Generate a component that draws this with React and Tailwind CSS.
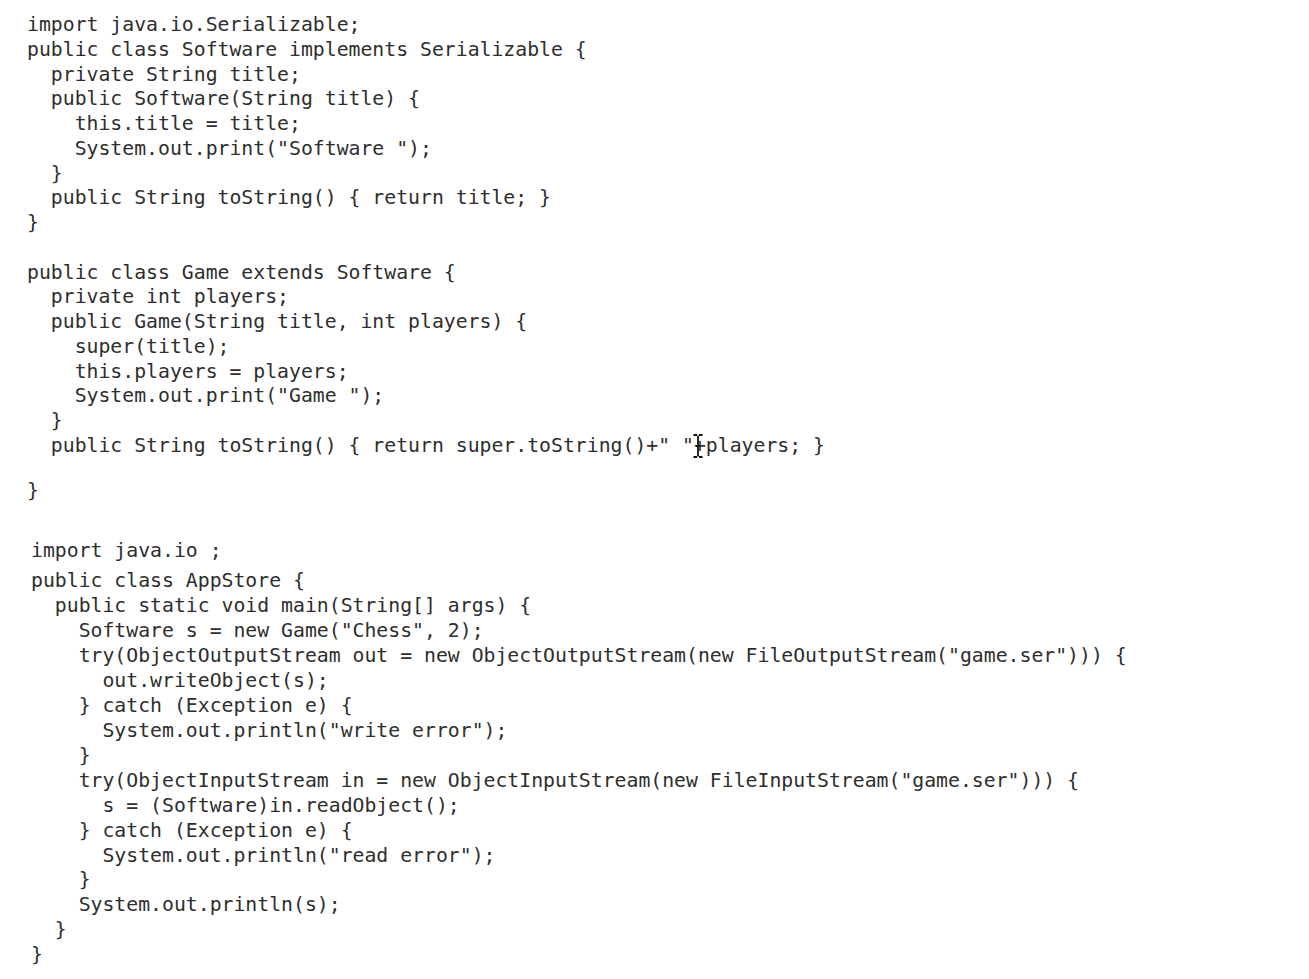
import React from "react";

const block1 = [
  "import java.io.Serializable;",
  "public class Software implements Serializable {",
  "  private String title;",
  "  public Software(String title) {",
  "    this.title = title;",
  '    System.out.print("Software ");',
  "  }",
  "  public String toString() { return title; }",
  "}",
];

const block2a = [
  "public class Game extends Software {",
  "  private int players;",
  "  public Game(String title, int players) {",
  "    super(title);",
  "    this.players = players;",
  '    System.out.print("Game ");',
  "  }",
];

const block3 = [
  "  public static void main(String[] args) {",
  '    Software s = new Game("Chess", 2);',
  '    try(ObjectOutputStream out = new ObjectOutputStream(new FileOutputStream("game.ser"))) {',
  "      out.writeObject(s);",
  "    } catch (Exception e) {",
  '      System.out.println("write error");',
  "    }",
  '    try(ObjectInputStream in = new ObjectInputStream(new FileInputStream("game.ser"))) {',
  "      s = (Software)in.readObject();",
  "    } catch (Exception e) {",
  '      System.out.println("read error");',
  "    }",
  "    System.out.println(s);",
  "  }",
  "}",
];

function Line({ children, className = "" }) {
  return <div className={"whitespace-pre h-[24.75px] " + className}>{children}</div>;
}

function Line3({ children, className = "" }) {
  return <div className={"whitespace-pre h-[24.95px] " + className}>{children}</div>;
}

export default function App() {
  return (
    <div
      className="w-[1309px] h-[979px] bg-white text-[#2e2e2e] text-[19.8px] leading-[24.75px] pt-[13px] pl-[27px] overflow-hidden"
      style={{ fontFamily: '"DejaVu Sans Mono", "Liberation Mono", monospace' }}
    >
      <div>
        {block1.map((l, i) => (
          <Line key={i}>{l}</Line>
        ))}
      </div>
      <div className="mt-[24.75px]">
        {block2a.map((l, i) => (
          <Line key={i}>{l}</Line>
        ))}
        <Line>
          {'  public String toString() { return super.toString()+" "'}
          <span className="relative">
            +
            <svg
              className="absolute left-[-2px] top-[-2px]"
              width="12"
              height="28"
              viewBox="0 0 12 28"
            >
              <path
                d="M1.5 3 H5 M7 3 H10.5 M6 3.5 V24.5 M1.5 25 H5 M7 25 H10.5 M4 14 H8"
                stroke="#111"
                strokeWidth="1.8"
                fill="none"
              />
            </svg>
          </span>
          {"players; }"}
        </Line>
        <Line className="mt-[20px]">{"}"}</Line>
      </div>
      <div className="mt-[36px] pl-[4px]">
        <Line3>{"import java.io ;"}</Line3>
        <Line3 className="mt-[5px]">{"public class AppStore {"}</Line3>
        {block3.map((l, i) => (
          <Line3 key={i}>{l}</Line3>
        ))}
      </div>
    </div>
  );
}
